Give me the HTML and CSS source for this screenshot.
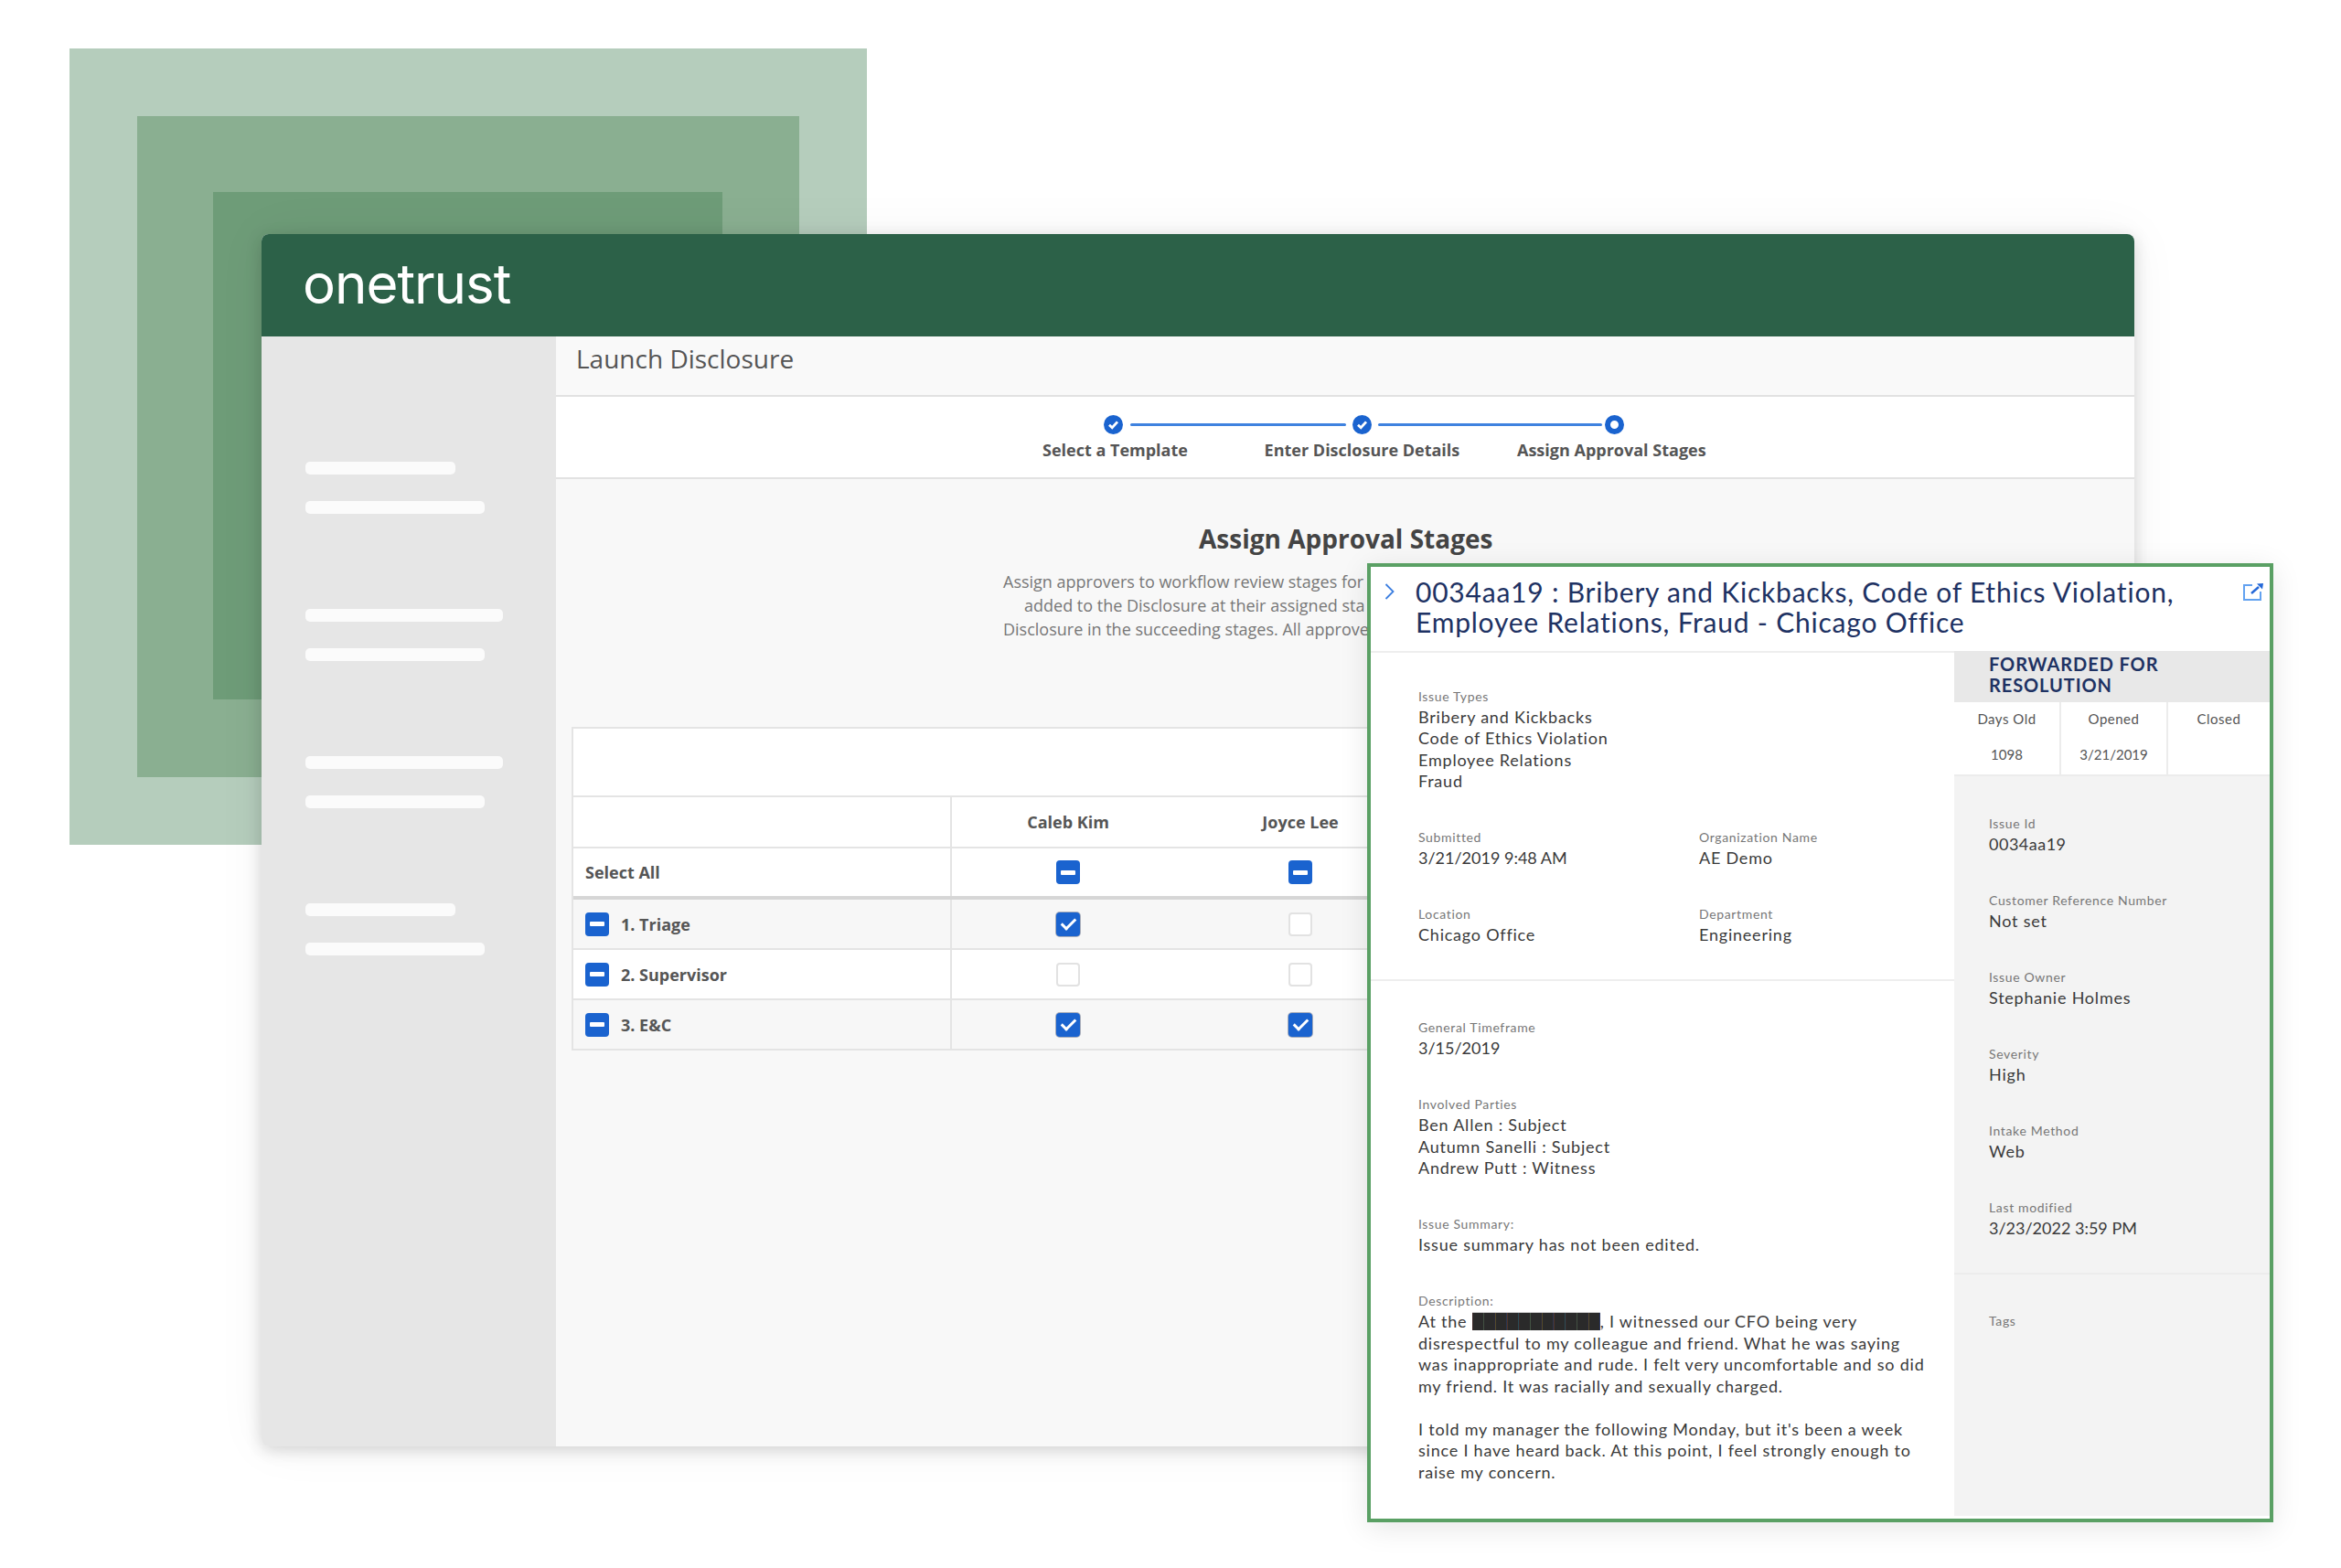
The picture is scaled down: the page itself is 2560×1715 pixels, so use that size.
FILE: index.html
```html
<!DOCTYPE html>
<html lang="en">
<head>
    <meta charset="UTF-8">
    <title>OneTrust Disclosure</title>
    <link rel="stylesheet" href="styles.css">
</head>
<body>
    <div class="square-outer">
        <div class="square-mid">
            <div class="square-inner"></div>
        </div>
    </div>

    <div class="window">
        <header class="brand-bar">onetrust</header>
        <div class="window-body">
            <nav class="sidebar">
                <div class="nav-group">
                    <div class="nav-bar nav-short"></div>
                    <div class="nav-bar"></div>
                </div>
                <div class="nav-group">
                    <div class="nav-bar nav-long"></div>
                    <div class="nav-bar"></div>
                </div>
                <div class="nav-group">
                    <div class="nav-bar nav-long"></div>
                    <div class="nav-bar"></div>
                </div>
                <div class="nav-group">
                    <div class="nav-bar nav-short"></div>
                    <div class="nav-bar"></div>
                </div>
            </nav>
            <main class="content">
                <div class="page-title">Launch Disclosure</div>
                <div class="stepper">
                    <div class="step-rail">
                        <svg class="step-dot" viewBox="0 0 21 21"><circle cx="10.5" cy="10.5" r="10.5" fill="#1a63cf"/><path d="M6 10.800l3.200 3 5.800-6.400" fill="none" stroke="#fff" stroke-width="2.800"/></svg>
                        <span class="step-line"></span>
                        <svg class="step-dot" viewBox="0 0 21 21"><circle cx="10.5" cy="10.5" r="10.5" fill="#1a63cf"/><path d="M6 10.800l3.200 3 5.800-6.400" fill="none" stroke="#fff" stroke-width="2.800"/></svg>
                        <span class="step-line step-line-b"></span>
                        <svg class="step-dot" viewBox="0 0 21 21"><circle cx="10.5" cy="10.5" r="7.5" fill="#fff" stroke="#1a63cf" stroke-width="6"/></svg>
                    </div>
                    <div class="step-labels">
                        <span>Select a Template</span>
                        <span class="step-two">Enter Disclosure Details</span>
                        <span class="step-three">Assign Approval Stages</span>
                    </div>
                </div>
                <div class="intro">
                    <h2>Assign Approval Stages</h2>
                    <p>Assign approvers to workflow review stages for</p>
                    <p class="intro-indent">added to the Disclosure at their assigned sta</p>
                    <p>Disclosure in the succeeding stages. All approve</p>
                </div>
                <div class="stage-table">
                    <div class="table-top"></div>
                    <div class="table-row row-head">
                        <div class="cell-name"></div>
                        <div class="cell-check">Caleb Kim</div>
                        <div class="cell-check">Joyce Lee</div>
                    </div>
                    <div class="table-row row-all">
                        <div class="cell-name">Select All</div>
                        <div class="cell-check"><span class="box box-on box-minus"></span></div>
                        <div class="cell-check"><span class="box box-on box-minus"></span></div>
                    </div>
                    <div class="table-row row-tint">
                        <div class="cell-name"><span class="box box-on box-minus"></span>1. Triage</div>
                        <div class="cell-check"><span class="box box-on box-tick"></span></div>
                        <div class="cell-check"><span class="box"></span></div>
                    </div>
                    <div class="table-row">
                        <div class="cell-name"><span class="box box-on box-minus"></span>2. Supervisor</div>
                        <div class="cell-check"><span class="box"></span></div>
                        <div class="cell-check"><span class="box"></span></div>
                    </div>
                    <div class="table-row row-tint">
                        <div class="cell-name"><span class="box box-on box-minus"></span>3. E&amp;C</div>
                        <div class="cell-check"><span class="box box-on box-tick"></span></div>
                        <div class="cell-check"><span class="box box-on box-tick"></span></div>
                    </div>
                </div>
            </main>
        </div>
    </div>

    <section class="issue-panel">
        <header class="issue-head">
            <svg class="issue-chevron" viewBox="0 0 11 18"><path d="M1.500 1l8 8-8 8" fill="none" stroke="#3d7fe0" stroke-width="1.800"/></svg>
            <h1>0034aa19 : Bribery and Kickbacks, Code of Ethics Violation,<br>Employee Relations, Fraud - Chicago Office</h1>
            <svg class="issue-open" viewBox="0 0 22 19"><path d="M10 2H1v16h18V9" fill="none" stroke="#63a2f0" stroke-width="2"/><path d="M9 11l8-7" fill="none" stroke="#2468d8" stroke-width="2.400"/><path d="M22 0l-7 .5 6 6z" fill="#2468d8"/></svg>
        </header>
        <div class="issue-body">
            <div class="issue-main">
                <div class="issue-top">
                    <div class="field">
                        <div class="field-label">Issue Types</div>
                        <div class="field-value">Bribery and Kickbacks<br>Code of Ethics Violation<br>Employee Relations<br>Fraud</div>
                    </div>
                    <div class="field-pair">
                        <div class="field">
                            <div class="field-label">Submitted</div>
                            <div class="field-value field-date">3/21/2019 9:48 AM</div>
                        </div>
                        <div class="field">
                            <div class="field-label">Organization Name</div>
                            <div class="field-value">AE Demo</div>
                        </div>
                    </div>
                    <div class="field-pair">
                        <div class="field">
                            <div class="field-label">Location</div>
                            <div class="field-value">Chicago Office</div>
                        </div>
                        <div class="field">
                            <div class="field-label">Department</div>
                            <div class="field-value">Engineering</div>
                        </div>
                    </div>
                </div>
                <div class="issue-bottom">
                    <div class="field">
                        <div class="field-label">General Timeframe</div>
                        <div class="field-value field-date">3/15/2019</div>
                    </div>
                    <div class="field">
                        <div class="field-label">Involved Parties</div>
                        <div class="field-value">Ben Allen : Subject<br>Autumn Sanelli : Subject<br>Andrew Putt : Witness</div>
                    </div>
                    <div class="field">
                        <div class="field-label">Issue Summary:</div>
                        <div class="field-value">Issue summary has not been edited.</div>
                    </div>
                    <div class="field">
                        <div class="field-label">Description:</div>
                        <div class="field-value">At the <span class="redacted">███████████</span>, I witnessed our CFO being very<br>disrespectful to my colleague and friend. What he was saying<br>was inappropriate and rude. I felt very uncomfortable and so did<br>my friend. It was racially and sexually charged.<br><br>I told my manager the following Monday, but it's been a week<br>since I have heard back. At this point, I feel strongly enough to<br>raise my concern.</div>
                    </div>
                </div>
            </div>
            <aside class="issue-side">
                <div class="status-title">FORWARDED FOR<br>RESOLUTION</div>
                <div class="status-stats">
                    <div class="stat"><span class="stat-label">Days Old</span><span>1098</span></div>
                    <div class="stat"><span class="stat-label">Opened</span><span>3/21/2019</span></div>
                    <div class="stat stat-last"><span class="stat-label">Closed</span></div>
                </div>
                <div class="side-fields">
                    <div class="field">
                        <div class="field-label">Issue Id</div>
                        <div class="field-value field-id">0034aa19</div>
                    </div>
                    <div class="field">
                        <div class="field-label">Customer Reference Number</div>
                        <div class="field-value">Not set</div>
                    </div>
                    <div class="field">
                        <div class="field-label">Issue Owner</div>
                        <div class="field-value">Stephanie Holmes</div>
                    </div>
                    <div class="field">
                        <div class="field-label">Severity</div>
                        <div class="field-value">High</div>
                    </div>
                    <div class="field">
                        <div class="field-label">Intake Method</div>
                        <div class="field-value">Web</div>
                    </div>
                    <div class="field">
                        <div class="field-label">Last modified</div>
                        <div class="field-value field-date">3/23/2022 3:59 PM</div>
                    </div>
                </div>
                <div class="side-tags">
                    <div class="field-label">Tags</div>
                </div>
            </aside>
        </div>
    </section>
</body>
</html>
```

FILE: styles.css
```css
body {
    margin: 0;
    height: 1715px;
    position: relative;
    overflow: hidden;
    background: #fff;
    font-family: 'Open Sans', 'Liberation Sans', sans-serif;
}

/* background squares */
.square-outer {
    position: absolute;
    left: 76px;
    top: 53px;
    width: 872px;
    height: 871px;
    box-sizing: border-box;
    padding: 74px;
    background: #b5cdbc;
}
.square-mid {
    height: 100%;
    box-sizing: border-box;
    padding: 83px 84px 85px 83px;
    background: #8aaf91;
}
.square-inner {
    height: 100%;
    background: #6e9c78;
}

/* app window */
.window {
    position: absolute;
    left: 286px;
    top: 256px;
    width: 2048px;
    height: 1326px;
    border-radius: 8px;
    overflow: hidden;
    background: #f8f8f8;
    box-shadow: 0 4px 18px rgba(0, 0, 0, 0.16), 0 0 55px rgba(0, 0, 0, 0.05);
    display: flex;
    flex-direction: column;
}
.brand-bar {
    height: 112px;
    padding-left: 45px;
    background: #2c6148;
    color: #fff;
    font-family: 'Inter', sans-serif;
    font-size: 60px;
    line-height: 108px;
    letter-spacing: -1px;
    flex: none;
}
.window-body {
    flex: 1;
    display: flex;
}
.sidebar {
    width: 322px;
    box-sizing: border-box;
    padding: 137px 0 0 48px;
    background: #e6e6e6;
    display: flex;
    flex-direction: column;
    gap: 104px;
}
.nav-group {
    display: flex;
    flex-direction: column;
    gap: 29px;
}
.nav-bar {
    width: 196px;
    height: 14px;
    border-radius: 5px;
    background: #fbfbfb;
}
.nav-short {
    width: 164px;
}
.nav-long {
    width: 216px;
}

.content {
    flex: 1;
    color: #555;
}
.page-title {
    height: 64px;
    padding-left: 22px;
    background: #f9f9f9;
    border-bottom: 2px solid #e2e2e2;
    font-size: 28px;
    line-height: 48px;
}
.stepper {
    height: 88px;
    background: #fff;
    border-bottom: 2px solid #e2e2e2;
}
.step-rail {
    display: flex;
    align-items: center;
    padding: 20px 0 0 599px;
}
.step-dot {
    width: 21px;
    height: 21px;
}
.step-line {
    width: 236px;
    height: 3px;
    margin: 0 7px 0 8px;
    border-radius: 2px;
    background: #3f82df;
}
.step-line-b {
    width: 245px;
    margin: 0 3px 0 7px;
}
.step-labels {
    padding: 5px 0 0 532px;
    font-size: 18px;
    font-weight: 700;
    line-height: 24px;
    color: #555;
    white-space: nowrap;
}
.step-two {
    margin-left: 79px;
}
.step-three {
    margin-left: 58px;
}

.intro {
    padding: 46px 0 0 489px;
    height: 225px;
    box-sizing: border-box;
    color: #777;
    font-size: 18px;
    line-height: 26px;
    white-space: nowrap;
}
.intro h2 {
    margin: 0 0 15px 214px;
    color: #444;
    font-size: 28px;
    font-weight: 700;
    line-height: 38px;
}
.intro p {
    margin: 0;
}
.intro-indent {
    padding-left: 23px;
}

.stage-table {
    margin: 46px 19px 0 17px;
    background: #fff;
    border: 2px solid #e4e4e4;
    border-width: 2px 2px 0 2px;
    font-size: 18px;
    font-weight: 700;
    color: #555;
}
.table-top {
    height: 73px;
    border-bottom: 2px solid #e4e4e4;
}
.table-row {
    display: flex;
    height: 53px;
    border-bottom: 2px solid #e4e4e4;
}
.row-head {
    height: 54px;
}
.row-all {
    height: 52px;
    border-bottom: 4px solid #d6d6d6;
}
.row-tint {
    background: #f7f7f7;
}
.cell-name {
    width: 414px;
    box-sizing: border-box;
    padding-left: 13px;
    border-right: 2px solid #e4e4e4;
    display: flex;
    align-items: center;
    gap: 13px;
}
.cell-check {
    width: 254px;
    display: flex;
    align-items: center;
    justify-content: center;
}
.box {
    width: 26px;
    height: 26px;
    box-sizing: border-box;
    border: 2px solid #e2e2e2;
    border-radius: 4px;
    background: #fff;
    position: relative;
    flex: none;
}
.box-on {
    border: none;
    background: #1a63cf;
}
.box-minus::after {
    content: "";
    position: absolute;
    left: 5px;
    top: 10.500px;
    width: 16px;
    height: 5px;
    border-radius: 1px;
    background: #fff;
}
.box-tick {
    box-shadow: 0 0 0 1px rgba(90, 100, 125, 0.5);
}
.box-tick::after {
    content: "";
    position: absolute;
    left: 9px;
    top: 3px;
    width: 6px;
    height: 13px;
    border: solid #fff;
    border-width: 0 3.500px 3.500px 0;
    transform: rotate(45deg);
}

/* issue panel */
.issue-panel {
    position: absolute;
    left: 1495px;
    top: 616px;
    width: 991px;
    height: 1049px;
    box-sizing: border-box;
    border: 4px solid #5aa064;
    background: #fff;
    box-shadow: 0 6px 30px rgba(0, 0, 0, 0.1);
    font-family: 'Lato', 'Liberation Sans', sans-serif;
    display: flex;
    flex-direction: column;
}
.issue-head {
    height: 92px;
    box-sizing: border-box;
    padding: 11px 7px 0 15px;
    display: flex;
    align-items: flex-start;
    flex: none;
}
.issue-head h1 {
    margin: 0 0 0 23px;
    flex: 1;
    color: #1e3263;
    font-size: 30px;
    font-weight: 400;
    line-height: 33px;
    letter-spacing: 0.78px;
    white-space: nowrap;
}
.issue-chevron {
    width: 11px;
    height: 18px;
    margin-top: 7px;
}
.issue-open {
    width: 22px;
    height: 19px;
    margin-top: 7px;
}
.issue-body {
    flex: 1;
    display: flex;
    min-height: 0;
}
.issue-main {
    width: 638px;
    flex: none;
    border-top: 2px solid #eeeeee;
    box-sizing: border-box;
}
.issue-top,
.issue-bottom {
    padding-left: 52px;
    display: flex;
    flex-direction: column;
    gap: 37.500px;
}
.issue-top {
    padding-top: 35.500px;
    padding-bottom: 36px;
    border-bottom: 2px solid #eeeeee;
}
.issue-bottom {
    padding-top: 39.500px;
}
.field-pair {
    display: grid;
    grid-template-columns: 307px 1fr;
}
.field-label {
    color: #777;
    font-size: 14px;
    line-height: 23px;
    letter-spacing: 0.65px;
}
.field-value {
    color: #3a3a3a;
    font-size: 18px;
    line-height: 23.500px;
    letter-spacing: 0.78px;
    white-space: nowrap;
}
.field-date {
    letter-spacing: 0;
}
.field-id {
    letter-spacing: 0.5px;
}
.redacted {
    display: inline-block;
    width: 140px;
    height: 20px;
    overflow: hidden;
    line-height: 20px;
    vertical-align: -3px;
    letter-spacing: 0;
    color: #2a2a2a;
}
.issue-side {
    flex: 1;
    min-width: 0;
    margin-bottom: 3px;
    background: #f3f3f3;
    display: flex;
    flex-direction: column;
}
.status-title {
    height: 56px;
    box-sizing: border-box;
    padding: 3px 0 0 38px;
    background: #e8e8e8;
    color: #1e3263;
    font-size: 20px;
    font-weight: 700;
    line-height: 23px;
    letter-spacing: 0.9px;
}
.status-stats {
    height: 81px;
    display: flex;
    background: #fff;
    border-bottom: 2px solid #ececec;
    box-sizing: border-box;
    color: #555;
    font-size: 15px;
}
.stat {
    width: 117px;
    padding-top: 7px;
    border-right: 2px solid #ececec;
    box-sizing: border-box;
    display: flex;
    flex-direction: column;
    align-items: center;
    gap: 16px;
    line-height: 23px;
}
.stat-label {
    letter-spacing: 0.5px;
}
.stat-last {
    width: 111px;
    border-right: none;
}
.side-fields {
    padding: 39.500px 0 37px 38px;
    display: flex;
    flex-direction: column;
    gap: 37.500px;
    border-bottom: 2px solid #ececec;
}
.side-tags {
    padding: 39px 0 0 38px;
}
```
